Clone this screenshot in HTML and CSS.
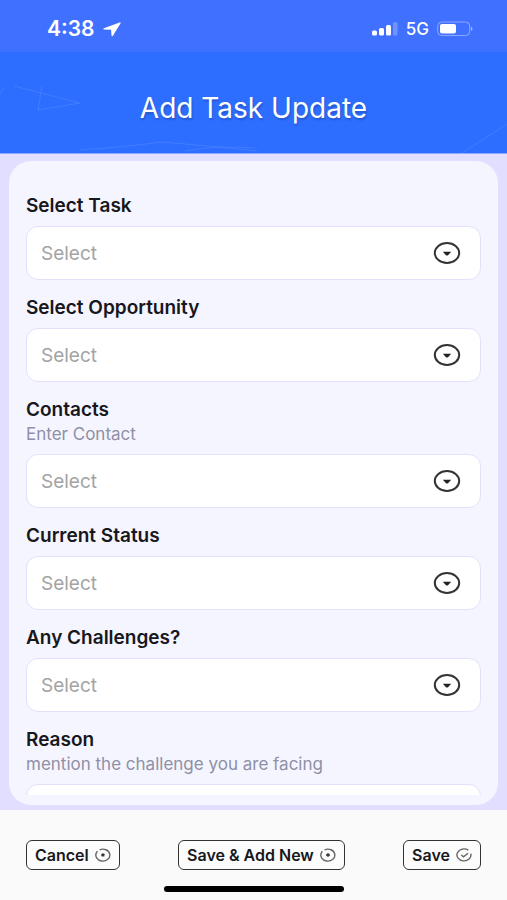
FILE: index.html
```html
<!DOCTYPE html>
<html lang="en">
<head>
  <meta charset="UTF-8">
  <title>Add Task Update</title>
  <meta name="viewport" content="width=device-width, initial-scale=1.0">
  <link rel="stylesheet" href="styles.css">
</head>
<body>
  <svg class="sprite" aria-hidden="true">
    <symbol id="icon-dropdown" viewBox="0 0 28 24">
      <ellipse cx="14" cy="12" rx="12.2" ry="10" fill="none" stroke="#333" stroke-width="2"/>
      <path d="M9.8 10.8h8.4L15 14.2q-1 .8-2 0z" fill="#222"/>
    </symbol>
  </svg>

  <div class="status-bar">
    <div class="clock">
      <span>4:38</span>
      <svg width="18" height="15" viewBox="0 0 18 15"><path d="M16.6.4.9 6.3q-1.2.8.2 1.1l7 .3.4 5.9q.4 1.3 1.4.2L17.6 1.3q.2-1.2-1-.9z" fill="#fff"/></svg>
    </div>
    <div class="signal">
      <svg width="26" height="14" viewBox="0 0 26 14" fill="#fff">
        <rect x="0" y="8.5" width="5" height="5" rx="1.5"/>
        <rect x="7" y="6" width="5" height="7.5" rx="1.5"/>
        <rect x="14" y="3" width="5" height="10.5" rx="1.5"/>
        <rect x="21" y="0" width="4.5" height="13.5" rx="1.5" opacity=".25"/>
      </svg>
      <span>5G</span>
      <svg width="36" height="16" viewBox="0 0 36 16">
        <rect x=".7" y="1" width="32" height="13.5" rx="4" fill="none" stroke="#fff" stroke-opacity=".4"/>
        <rect x="3" y="3" width="16" height="9.5" rx="2" fill="#fff"/>
        <path d="M34 5.5q3 2.2 0 4.5z" fill="#fff" opacity=".5"/>
      </svg>
    </div>
  </div>

  <header class="page-header">
    <svg class="header-lines" viewBox="0 0 507 101" preserveAspectRatio="none" fill="none" stroke="#fff">
      <path d="M14 34 80 51 38 58M42 34l-4 24M0 42l4-6"/>
      <path d="M80 98q45-3 82-8 50 4 95 9M185 99q30-6 70-3M462 101l45-29"/>
    </svg>
    <h1>Add Task Update</h1>
  </header>

  <main>
    <div class="card">
      <form id="taskForm" class="fields">
        <div class="field">
          <label for="task">Select Task</label>
          <div class="select-box">
            <select id="task"><option>Select</option></select>
            <svg><use href="#icon-dropdown"/></svg>
          </div>
        </div>
        <div class="field">
          <label for="opportunity">Select Opportunity</label>
          <div class="select-box">
            <select id="opportunity"><option>Select</option></select>
            <svg><use href="#icon-dropdown"/></svg>
          </div>
        </div>
        <div class="field">
          <label for="contacts">Contacts</label>
          <p class="hint">Enter Contact</p>
          <div class="select-box">
            <select id="contacts"><option>Select</option></select>
            <svg><use href="#icon-dropdown"/></svg>
          </div>
        </div>
        <div class="field">
          <label for="status">Current Status</label>
          <div class="select-box">
            <select id="status"><option>Select</option></select>
            <svg><use href="#icon-dropdown"/></svg>
          </div>
        </div>
        <div class="field">
          <label for="challenges">Any Challenges?</label>
          <div class="select-box">
            <select id="challenges"><option>Select</option></select>
            <svg><use href="#icon-dropdown"/></svg>
          </div>
        </div>
        <div class="field">
          <label for="reason">Reason</label>
          <p class="hint">mention the challenge you are facing</p>
          <textarea id="reason"></textarea>
        </div>
      </form>
    </div>
  </main>

  <footer>
    <div class="actions">
      <button type="button">Cancel
        <svg width="16" height="14" viewBox="0 0 16 14"><path d="M4.6 1.8A7 6 0 1 1 1.6 4.4M1.6 4.4A7 6 0 0 1 2.4 3.3"/><path d="m6.6 5.8 2.8 2.4m0-2.4L6.6 8.2" class="mark"/></svg>
      </button>
      <button type="button">Save &amp; Add New
        <svg width="16" height="14" viewBox="0 0 16 14"><path d="M4.6 1.8A7 6 0 1 1 1.6 4.4M1.6 4.4A7 6 0 0 1 2.4 3.3"/><path d="M8 5.2v3.6M6 7h4" class="mark"/></svg>
      </button>
      <button type="submit" form="taskForm">Save
        <svg width="16" height="14" viewBox="0 0 16 14"><path d="M12.3 2.2A7 6 0 1 0 14.8 5.6"/><path d="m5.3 7 2.2 1.8L12 5.2"/></svg>
      </button>
    </div>
    <div class="home-bar"></div>
  </footer>
</body>
</html>
```

FILE: styles.css
```css
* {
  box-sizing: border-box;
}
body {
  margin: 0;
  height: 100vh;
  display: flex;
  flex-direction: column;
  font-family: Inter, "Open Sans", sans-serif;
  background: #e1deff;
  color: #17171c;
}
.sprite {
  display: none;
}
.status-bar {
  flex: none;
  display: flex;
  justify-content: space-between;
  padding: 17px 34px 11px 47px;
  background: #4070ff;
  color: #fff;
}
.clock, .signal {
  display: flex;
  align-items: center;
  gap: 8px;
  line-height: 24px;
}
.clock {
  font-size: 21px;
  font-weight: 600;
}
.signal {
  font-size: 17px;
  font-weight: 500;
}
.page-header {
  flex: none;
  display: grid;
  background: #2d6dff;
  border-bottom: 1px solid #8eaaff;
}
.page-header > * {
  grid-area: 1 / 1;
}
.header-lines {
  width: 100%;
  height: 101px;
  opacity: 0.1;
}
h1 {
  margin: 0;
  padding-top: 10px;
  place-self: center;
  font-size: 28px;
  line-height: 32px;
  font-weight: 400;
  color: #fff;
  text-shadow: 1px 2px 2px rgba(0, 0, 0, 0.2);
}
main {
  flex: 1;
  min-height: 0;
  display: flex;
  padding: 7px 9px 5px;
}
.card {
  flex: 1;
  display: flex;
  padding-bottom: 10px;
  border-radius: 22px;
  background: #f5f5ff;
}
.fields {
  flex: 1;
  padding: 33px 17px 0;
  overflow-y: auto;
  scrollbar-width: none;
}
.field {
  margin-bottom: 16px;
}
label {
  display: block;
  font-size: 19px;
  line-height: 24px;
  font-weight: 600;
}
.hint {
  margin: 0;
  font-size: 17px;
  line-height: 24px;
  color: #8e90a6;
}
.select-box {
  display: grid;
  align-items: center;
  margin-top: 8px;
}
.select-box > * {
  grid-area: 1 / 1;
}
select, textarea {
  width: 100%;
  height: 54px;
  border: 1px solid #e2e0fb;
  border-radius: 12px;
  background: #fff;
  font-family: inherit;
  font-size: 19px;
  color: #a3a3a3;
}
select {
  appearance: none;
  padding: 0 56px 0 14px;
}
textarea {
  display: block;
  height: 120px;
  margin-top: 8px;
  padding: 14px;
  resize: none;
}
.select-box svg {
  justify-self: end;
  width: 28px;
  height: 24px;
  margin-right: 20px;
  pointer-events: none;
}
footer {
  flex: none;
  padding: 30px 26px 8px;
  background: #fafafa;
}
.actions {
  display: flex;
  justify-content: space-between;
}
button {
  display: flex;
  align-items: center;
  gap: 6px;
  height: 30px;
  padding: 0 8px;
  border: 1px solid #333;
  border-radius: 6px;
  background: #fcfcfc;
  font-family: inherit;
  font-size: 16px;
  font-weight: 600;
  color: #17171c;
}
button svg {
  fill: none;
  stroke: #666;
  stroke-width: 1.4;
}
.mark {
  stroke: #333;
  stroke-width: 1.6;
}
.home-bar {
  width: 180px;
  height: 6px;
  margin: 16px auto 0;
  border-radius: 3px;
  background: #000;
}
```
